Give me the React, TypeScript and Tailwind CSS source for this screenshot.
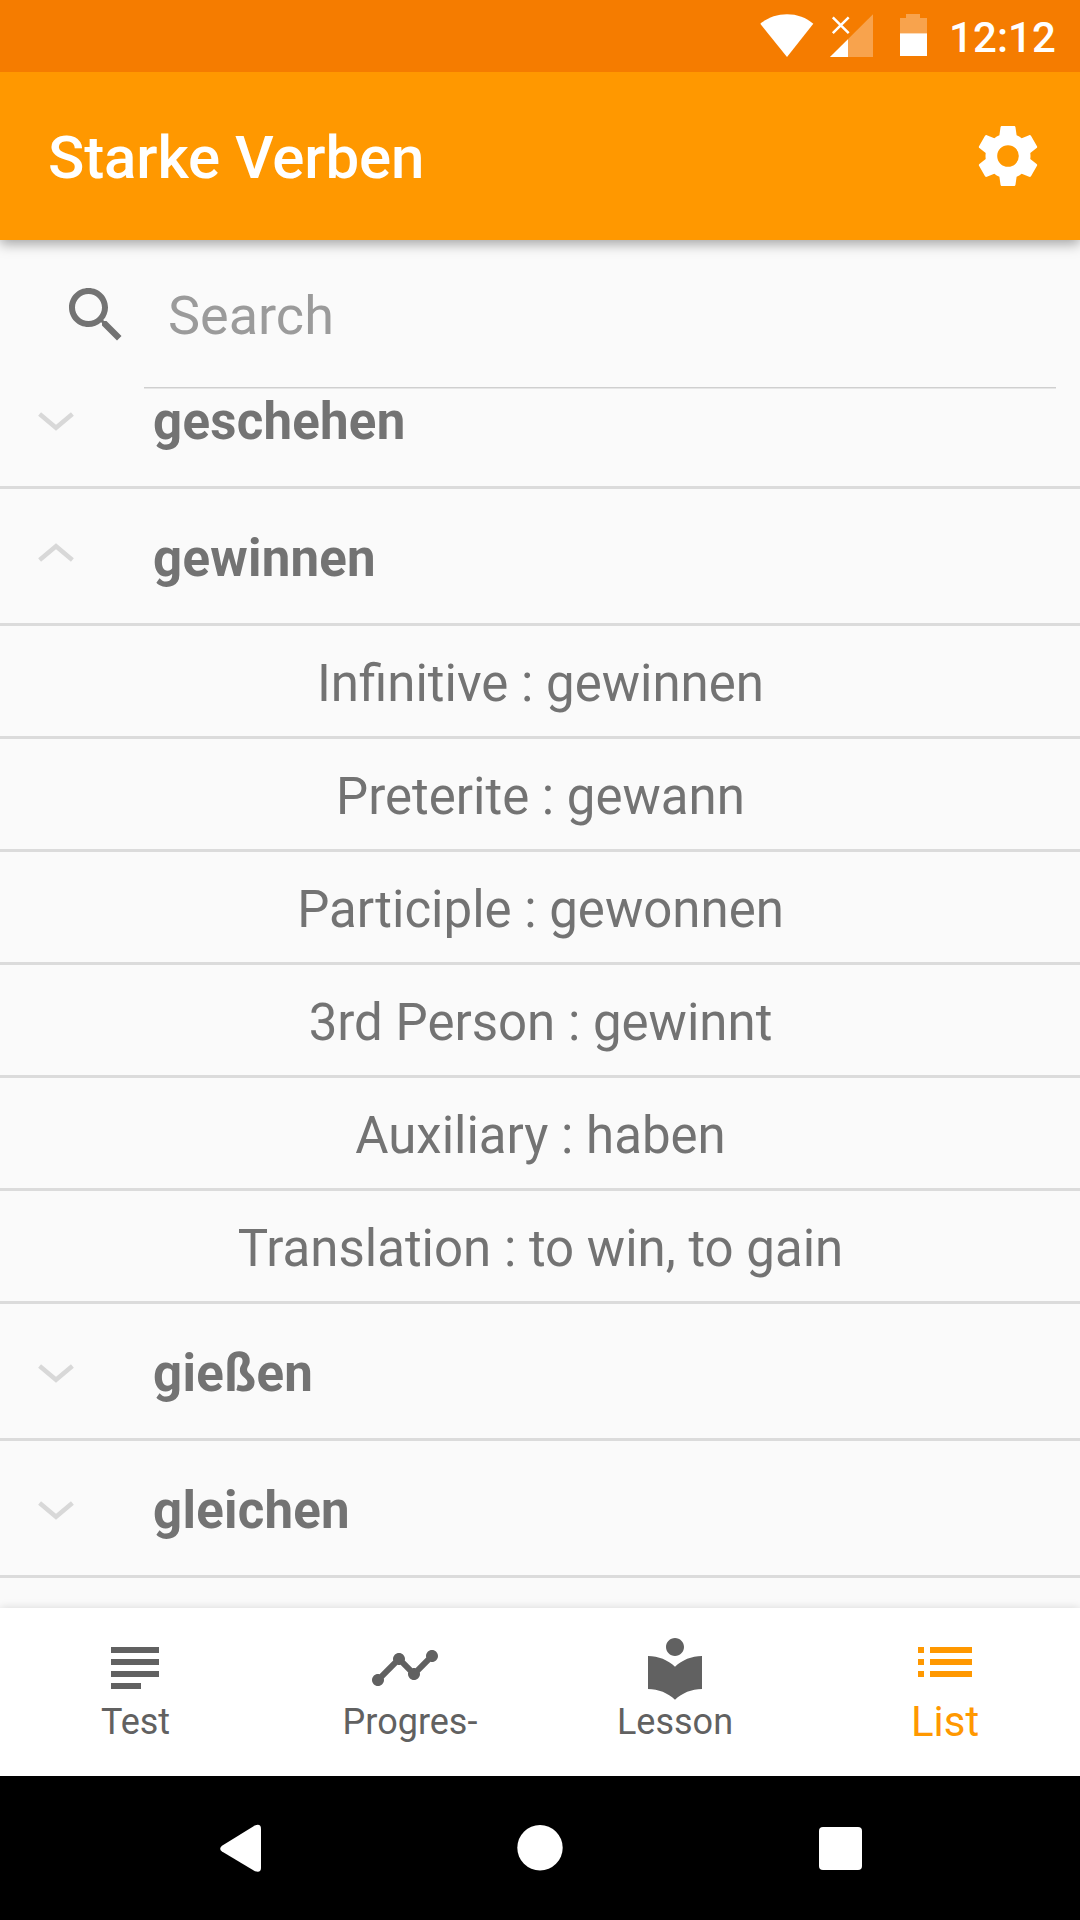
import React from "react";

const details = [
  "Infinitive : gewinnen",
  "Preterite : gewann",
  "Participle : gewonnen",
  "3rd Person : gewinnt",
  "Auxiliary : haben",
  "Translation : to win, to gain",
];

function StatusBar() {
  return (
    <div className="relative z-20 flex h-[72px] shrink-0 items-start justify-end bg-[#f57c00] pr-6">
      <svg className="mr-4 mt-3 h-12 w-[54px]" viewBox="0 0 54 48" fill="#fff">
        <path d="M27 45 .3 11.8C7.500 5.500 17 2.200 27 2.200s19.500 3.300 26.300 9.600z" />
      </svg>
      <svg className="mr-[27px] mt-3 h-12 w-[43px]" viewBox="0 0 43 48">
        <path d="M0 45 43 2.300V45z" fill="#fff" fillOpacity=".3" />
        <path d="M0 45 18 27.300V45z" fill="#fff" />
        <path d="M2.800 5.300 18.700 21.200M18.700 5.300 2.800 21.200" stroke="#fff" strokeWidth="2.500" />
      </svg>
      <svg className="mr-[22px] mt-3 h-12 w-[27px]" viewBox="0 0 27 48" fill="#fff">
        <path d="M6 2h14v4h7v15.300H0V6h6z" fillOpacity=".3" />
        <path d="M0 21.300h27V44H0z" />
      </svg>
      <span className="mt-[14px] text-[42px] font-medium leading-[48px] tracking-[0.1px] text-white">12:12</span>
    </div>
  );
}

function Toolbar() {
  return (
    <header className="relative z-10 flex h-[168px] shrink-0 items-center justify-between bg-[#ff9800] pl-12 pr-9 shadow-[0_4px_12px_rgba(0,0,0,0.35)]">
      <h1 className="mt-1 text-[60px] font-medium leading-[72px] tracking-[-0.1px] text-white">Starke Verben</h1>
      <svg className="size-[72px]" viewBox="0 0 24 24" fill="#fff">
        <path d="M19.43 12.98c.04-.32.07-.64.07-.98s-.03-.66-.07-.98l2.110-1.650c.19-.15.24-.42.12-.64l-2-3.460c-.12-.22-.39-.3-.61-.22l-2.490 1c-.52-.4-1.080-.73-1.690-.98l-.38-2.650C14.460 2.180 14.250 2 14 2h-4c-.25 0-.46.18-.49.42l-.38 2.650c-.61.25-1.170.59-1.690.98l-2.490-1c-.23-.09-.49 0-.61.22l-2 3.460c-.13.22-.07.49.12.64l2.110 1.650c-.04.32-.07.65-.07.98s.03.66.07.98l-2.110 1.650c-.19.15-.24.42-.12.64l2 3.460c.12.22.39.3.61.22l2.490-1c.52.4 1.080.73 1.690.98l.38 2.650c.03.24.24.42.49.42h4c.25 0 .46-.18.49-.42l.38-2.650c.61-.25 1.170-.59 1.690-.98l2.490 1c.23.09.49 0 .61-.22l2-3.460c.12-.22.07-.49-.12-.64l-2.110-1.650zM12 15.600a3.600 3.600 0 1 1 0-7.200 3.600 3.600 0 0 1 0 7.200z" />
      </svg>
    </header>
  );
}

function SearchField() {
  return (
    <div className="flex h-[148px] shrink-0 pl-[60px] pr-6">
      <svg className="mt-[39px] size-[72px] shrink-0" viewBox="0 0 24 24" fill="#737373">
        <path d="M15.500 14h-.8l-.3-.3c1-1.100 1.600-2.600 1.600-4.200C16 5.900 13.100 3 9.500 3S3 5.900 3 9.500 5.900 16 9.500 16c1.600 0 3.100-.6 4.200-1.600l.3.3v.8l5 5 1.500-1.500zm-6 0C7 14 5 12 5 9.500S7 5 9.500 5 14 7 14 9.500 12 14 9.500 14z" />
      </svg>
      <div className="ml-3 flex flex-1 border-b border-[#cfcfcf] pl-6 shadow-[0_1px_0_#e6e6e6]">
        <span className="mt-[44px] h-[64px] text-[54px] leading-[64px] text-[#9b9b9b]">Search</span>
      </div>
    </div>
  );
}

function Group({ name, open = false }: { name: string; open?: boolean }) {
  return (
    <div className="flex h-[137px] shrink-0 items-start border-b-3 border-[#dbdbdb] pl-[38px]">
      <svg
        className={open ? "mt-[54px] h-[20px] w-[36px]" : "mt-[60px] h-[20px] w-[36px]"}
        viewBox="0 0 36 20"
        fill="none"
        stroke="#d8d8d8"
        strokeWidth="4.500"
      >
        <path d={open ? "M1.600 17 18 3.300 34.400 17" : "M1.600 2 18 15.700 34.400 2"} />
      </svg>
      <span className="ml-[79px] mt-[40px] text-[51px] font-bold leading-[60px] tracking-[0.25px] text-[#737373]">{name}</span>
    </div>
  );
}

function Detail({ text }: { text: string }) {
  return (
    <div className="flex h-[113px] shrink-0 items-start justify-center border-b-3 border-[#dbdbdb] pl-px pt-[28px]">
      <span className="text-[51px] leading-[60px] text-[#737373]">{text}</span>
    </div>
  );
}

const tabs = [
  { label: "Test", inset: "pl-px", d: "M14 17H4v2h10v-2zm6-8H4v2h16V9zM4 15h16v-2H4v2zM4 5v2h16V5H4z" },
  {
    label: "Progres-",
    inset: "pl-[10px]",
    d: "M23 8c0 1.100-.9 2-2 2-.18 0-.35-.02-.51-.07l-3.560 3.550c.05.16.07.34.07.52 0 1.100-.9 2-2 2s-2-.9-2-2c0-.18.02-.36.07-.52l-2.550-2.550c-.16.05-.34.07-.52.07s-.36-.02-.52-.07l-4.550 4.560c.05.16.07.33.07.51 0 1.100-.9 2-2 2s-2-.9-2-2 .9-2 2-2c.18 0 .35.02.51.07l4.560-4.550C8.020 9.360 8 9.180 8 9c0-1.100.9-2 2-2s2 .9 2 2c0 .18-.02.36-.07.52l2.550 2.550c.16-.05.34-.07.52-.07s.36.02.52.07l3.550-3.560C19.020 8.350 19 8.180 19 8c0-1.100.9-2 2-2s2 .9 2 2z",
  },
  {
    label: "Lesson",
    inset: "pl-0",
    d: "M12 11.550C9.640 9.350 6.480 8 3 8v11c3.480 0 6.640 1.350 9 3.550 2.360-2.190 5.520-3.550 9-3.550V8c-3.480 0-6.640 1.350-9 3.550zM12 8c1.660 0 3-1.340 3-3s-1.340-3-3-3-3 1.340-3 3 1.340 3 3 3z",
  },
];

function BottomTabs() {
  return (
    <nav className="relative z-10 grid h-[168px] shrink-0 grid-cols-4 bg-white shadow-[0_0_9px_rgba(0,0,0,0.14)]">
      {tabs.map((t) => (
        <div key={t.label} className="flex flex-col items-center pt-6 text-[#616161]">
          <svg className="size-[72px]" viewBox="0 0 24 24" fill="currentColor">
            <path d={t.d} />
          </svg>
          <span className={`-mt-4 text-[36px] leading-[68px] ${t.inset}`}>{t.label}</span>
        </div>
      ))}
      <div className="flex flex-col items-center pt-[18px] text-[#ff9800]">
        <svg className="size-[72px]" viewBox="0 0 24 24" fill="currentColor">
          <path d="M3 13h2v-2H3zm0 4h2v-2H3zm0-8h2V7H3zm4 4h14v-2H7zm0 4h14v-2H7zM7 7v2h14V7z" />
        </svg>
        <span className="-mt-[10px] text-[42px] leading-[68px]">List</span>
      </div>
    </nav>
  );
}

function SystemNav() {
  return (
    <div className="flex h-[144px] shrink-0 items-center justify-between bg-black pl-[219px] pr-[218px]">
      <svg className="h-12 w-[42px]" viewBox="0 0 42 48" fill="#fff">
        <path d="M3 21.800 35.800 1.500Q42 -.8 42 5v39q0 5-6 3.200L3 27.500q-3.600-2.800 0-5.700z" />
      </svg>
      <svg className="size-[46px]" viewBox="0 0 46 46" fill="#fff">
        <circle cx="23" cy="22.800" r="22.700" />
      </svg>
      <div className="mt-px size-[43px] rounded-[4px] bg-white" />
    </div>
  );
}

export default function App() {
  return (
    <div className="flex h-[1920px] w-[1080px] flex-col overflow-hidden bg-[#fafafa] font-['Roboto',sans-serif]">
      <StatusBar />
      <Toolbar />
      <SearchField />
      <main className="mt-px flex min-h-0 flex-1 flex-col overflow-hidden">
        <div className="-mt-[37px] flex flex-col">
          <Group name="geschehen" />
          <Group name="gewinnen" open />
          {details.map((d) => (
            <Detail key={d} text={d} />
          ))}
          <Group name="gießen" />
          <Group name="gleichen" />
        </div>
      </main>
      <BottomTabs />
      <SystemNav />
    </div>
  );
}
